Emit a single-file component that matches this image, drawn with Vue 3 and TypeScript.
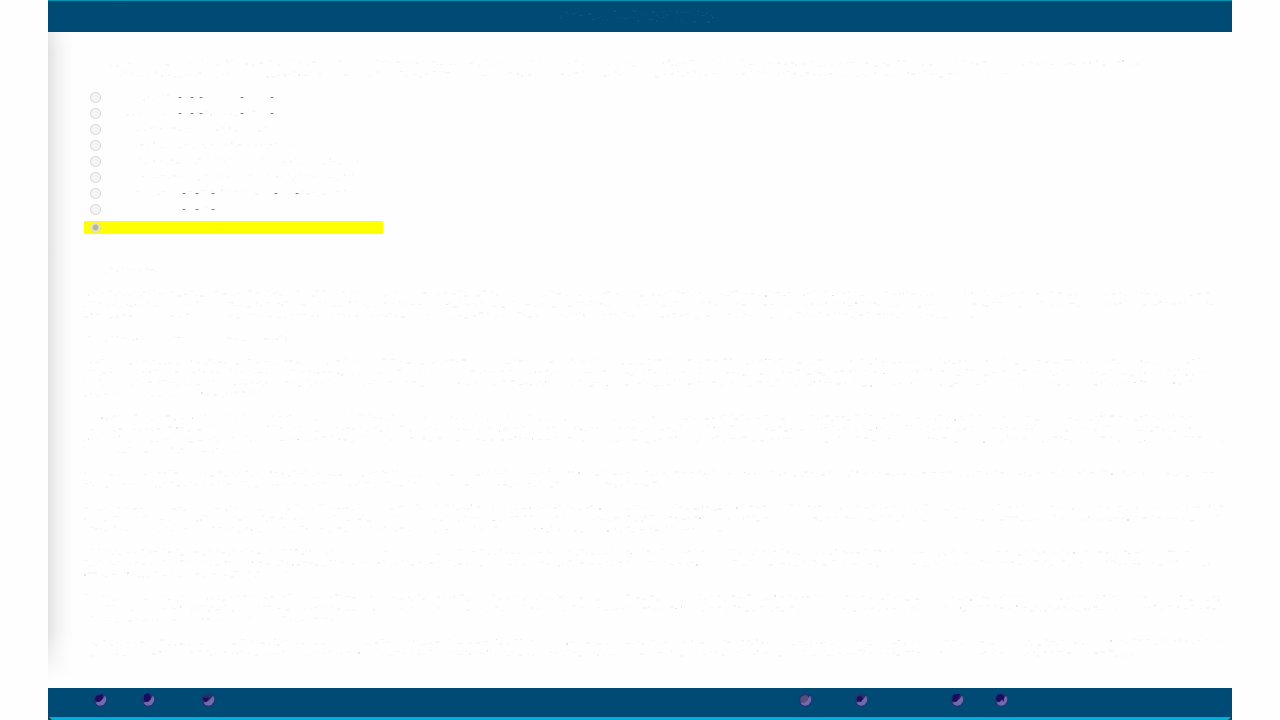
<script setup lang="ts">
import { ref } from 'vue'

interface Speck { x: number; y: number; w: number; h: number; o: number }

let seed = 4127
function rand(): number {
  seed = (seed * 16807) % 2147483647
  return seed / 2147483647
}

// One line of faint marks between two horizontal positions.
function line(from: number, to: number, strength = 1): Speck[] {
  const specks: Speck[] = []
  let x = from
  while (x < to) {
    const w = 1 + Math.floor(rand() * 4)
    specks.push({
      x,
      y: 3 + Math.floor(rand() * 6),
      w,
      h: rand() > 0.5 ? 2 : 1,
      o: (w < 3 && rand() > 0.95 ? 0.09 : 0.01 + rand() * 0.025) * strength,
    })
    x += w + 1 + Math.floor(rand() * (rand() > 0.85 ? 26 : 5))
  }
  return specks
}

const title = [line(0, 154), line(0, 154)]
const corner = line(0, 54)
const intro = [line(26, 1066), line(36, 926)]
const heading = line(14, 76)

const options = [
  { marks: line(34, 150), dashes: [76, 88, 97, 138, 168] },
  { marks: line(24, 156), dashes: [76, 88, 97, 138, 168] },
  { marks: line(34, 170), dashes: [] },
  { marks: line(38, 190), dashes: [] },
  { marks: line(38, 270), dashes: [] },
  { marks: line(40, 256), dashes: [] },
  { marks: line(34, 250), dashes: [80, 93, 109, 172, 193] },
  { marks: line(76, 134, 0.5), dashes: [80, 93, 109] },
  { marks: line(24, 150, 0.2), dashes: [] },
]

const paragraphs = [
  [line(4, 1124), line(0, 1126), line(0, 892)],
  [line(4, 206)],
  [line(6, 1120), line(0, 1140), line(0, 1110), line(0, 170)],
  [line(6, 1110), line(6, 1138), line(0, 1138), line(0, 160)],
  [line(0, 1136), line(0, 582)],
  [line(0, 1136), line(0, 1136), line(6, 636)],
  [line(6, 1120), line(0, 1138), line(0, 226)],
  [line(0, 1136), line(10, 1138), line(6, 250)],
  [line(8, 1138), line(6, 1070)],
]

const selected = ref(8)

const toolGroups = [
  [
    { name: 'First', size: 'short', muted: false, mark: 'M4 4l4-1 2-1 1 4-2 3-3 1-3-2z' },
    { name: 'Previous', size: 'medium', muted: false, mark: 'M4 3l4-2 2 2 1 4-3 3-4-1z' },
    { name: 'Contents', size: 'short', muted: false, mark: 'M3 5l3 1 3-1-1 3-2 2-3-2z' },
  ],
  [
    { name: 'Back', size: 'roomy', muted: true, mark: 'M4 5l4-2 3 1 0 4-4 3-4-2z' },
    { name: 'Forward', size: 'wide', muted: false, mark: 'M4 5l4-1 2 3-2 3-4-1z' },
    { name: 'Help', size: 'narrow', muted: false, mark: 'M4 3l4-1 3 0-1 4-3 4-4-1z' },
    { name: 'Exit', size: 'short', muted: false, mark: 'M4 3l4-1 3 2 0 6-2-3-3 3-3-2z' },
  ],
]
</script>

<template>
  <div class="app">
    <header class="topbar">
      <svg class="corner-marks" aria-hidden="true">
        <rect v-for="(s, i) in corner" :key="i" :x="s.x" :y="s.y" :width="s.w" :height="s.h" :opacity="s.o * 8" />
      </svg>
      <div class="title-marks">
        <svg v-for="(t, n) in title" :key="n" aria-hidden="true">
          <rect v-for="(s, i) in t" :key="i" :x="s.x" :y="s.y - 2" :width="s.w" :height="s.h" :opacity="s.o * 12" />
        </svg>
      </div>
    </header>

    <main class="content">
      <div class="intro">
        <svg v-for="(l, n) in intro" :key="n" class="line" aria-hidden="true">
          <rect v-for="(s, i) in l" :key="i" :x="s.x" :y="s.y" :width="s.w" :height="s.h" :opacity="s.o" />
        </svg>
      </div>

      <form class="options">
        <label v-for="(o, n) in options" :key="n" class="option" :class="{ chosen: selected === n }">
          <input v-model="selected" type="radio" name="option" :value="n" :aria-label="'Option ' + (n + 1)" />
          <svg class="option-marks" aria-hidden="true">
            <rect v-for="(s, i) in o.marks" :key="'s' + i" :x="s.x" :y="s.y" :width="s.w" :height="s.h" :opacity="s.o" />
            <g v-for="d in o.dashes" :key="'d' + d">
              <rect :x="d + 1" y="6" width="2" height="1" opacity="0.42" />
              <rect :x="d" y="6" width="4" height="1" opacity="0.18" />
            </g>
          </svg>
        </label>
      </form>

      <section class="notes">
        <svg class="line" aria-hidden="true">
          <rect v-for="(s, i) in heading" :key="i" :x="s.x" :y="s.y" :width="s.w" :height="s.h" :opacity="s.o" />
        </svg>
        <div v-for="(p, k) in paragraphs" :key="k" class="paragraph">
          <svg v-for="(l, n) in p" :key="n" class="line" aria-hidden="true">
            <rect v-for="(s, i) in l" :key="i" :x="s.x" :y="s.y" :width="s.w" :height="s.h" :opacity="s.o" />
          </svg>
        </div>
      </section>
    </main>

    <footer class="bottombar">
      <nav v-for="(group, g) in toolGroups" :key="g" class="tools">
        <button v-for="t in group" :key="t.name" type="button" class="tool" :class="[t.size, { muted: t.muted }]" :aria-label="t.name">
          <svg width="16" height="16" viewBox="0 0 16 16">
            <path class="shade" d="M1.5 7.5l1-3 3-2.5 5-.5 3.5 2.5 1 4-1.5 4-3.5 2.5-4 0-3.5-2.5z" />
            <path class="ball" d="M13 3.8l1.3 2.4-.3 3.4-2.4 3.1-3.2 1.1-3-.8-2-2.4 3.4-.7 3.7-3z" />
            <path class="mark" :d="t.mark" />
          </svg>
        </button>
      </nav>
    </footer>
  </div>
</template>

<style>
body {
  background: #fefefe;
}
</style>

<style scoped>
.app {
  display: flex;
  flex-direction: column;
  min-height: 100vh;
  margin: 0 48px;
  font-family: "Liberation Sans", Arial, sans-serif;
  font-size: 11px;
}

.topbar {
  box-sizing: border-box;
  display: grid;
  grid-template-columns: 1fr 160px 1fr;
  height: 32px;
  padding-top: 5px;
  border-top: 1px solid #0093ba;
  background: linear-gradient(#004d70, #004b76 8px);
}

.corner-marks {
  width: 100px;
  height: 12px;
  margin-left: 36px;
  fill: #004165;
}

.title-marks {
  display: flex;
  flex-direction: column;
  margin-top: 3px;
}

.title-marks svg {
  width: 100%;
  height: 7px;
  fill: #1d6690;
}

.content {
  flex: 1;
  position: relative;
  padding: 25px 8px 28px 36px;
  background: #fefefe;
}

.content::before {
  content: "";
  position: absolute;
  inset: 0 auto 8px 0;
  width: 26px;
  background: linear-gradient(90deg, #e1e1e1, #f1f1f1 35%, #fafafa 70%, #fefefe);
  mask-image: linear-gradient(rgba(0, 0, 0, 0.7), #000 20px, #000 calc(100% - 50px), transparent);
}

.line {
  display: block;
  width: 100%;
  height: 11px;
}

.options {
  display: flex;
  flex-direction: column;
  align-items: flex-start;
  margin-top: 10px;
}

.option {
  box-sizing: border-box;
  display: flex;
  align-items: center;
  width: 299px;
  height: 16px;
  padding-left: 6px;
}

.option:last-child {
  height: 13px;
  margin-top: 4px;
}

.chosen {
  background: #ffff00;
}

.option input {
  appearance: none;
  box-sizing: border-box;
  flex: none;
  width: 11px;
  height: 11px;
  margin: 0 1px 0 0;
  border: 1px solid #d6d6d6;
  border-radius: 50%;
  background: #f5f5f5;
}

.option input:checked {
  border-color: #e2e29c;
  background: radial-gradient(circle, #b4b49c 0 2px, #e8e8cc 4px);
}

.option-marks {
  flex: 1;
  height: 12px;
  overflow: hidden;
}

.notes {
  display: flex;
  flex-direction: column;
  gap: 12px;
  margin-top: 30px;
}

.bottombar {
  box-sizing: border-box;
  position: relative;
  display: flex;
  justify-content: space-between;
  height: 32px;
  padding: 4px 191px 0 44px;
  border-bottom: 3px solid #00add9;
  background: #004b76;
}

.bottombar::before,
.bottombar::after {
  content: "";
  position: absolute;
  bottom: -3px;
  width: 4px;
  height: 4px;
  background: #183d48;
}

.bottombar::before {
  left: 0;
  clip-path: polygon(0 0, 100% 100%, 0 100%);
}

.bottombar::after {
  right: 0;
  clip-path: polygon(100% 0, 100% 100%, 0 100%);
}

.tools {
  display: flex;
}

.tool {
  display: block;
  height: 16px;
  padding: 0;
  border: 0;
  background: none;
  text-align: left;
  cursor: pointer;
}

.tool svg {
  display: block;
}

.narrow { width: 44px; }
.short { width: 48px; }
.roomy { width: 56px; }
.medium { width: 60px; }
.wide { width: 96px; }

.shade {
  fill: #26306f;
}

.ball {
  fill: #716bab;
}

.mark {
  fill: #190c5c;
}

.muted .mark {
  fill: #555078;
}
</style>
